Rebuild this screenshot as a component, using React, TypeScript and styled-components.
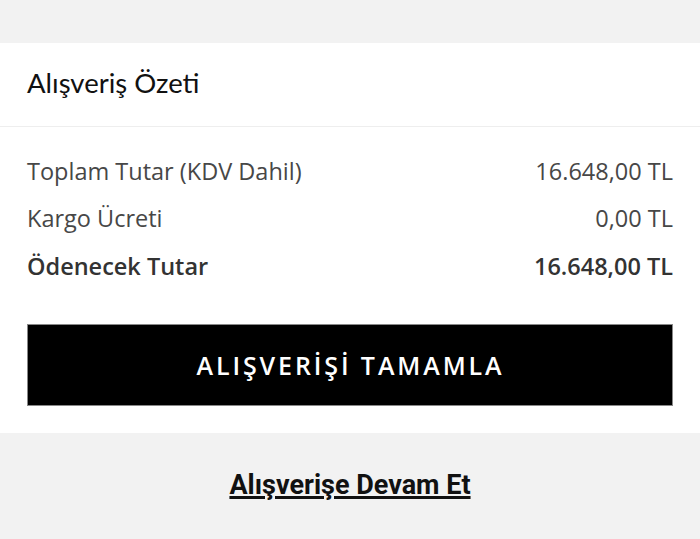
import React from "react";
import styled, { createGlobalStyle } from "styled-components";

const Global = createGlobalStyle`
  html, body { margin: 0; padding: 0; background: #f2f2f2; }
  body { font-family: "Open Sans", sans-serif; }
`;

const Page = styled.div`
  padding-top: 43px;
  width: 700px;
`;

const Card = styled.section`
  background: #ffffff;
`;

const Header = styled.div`
  height: 83px;
  display: flex;
  align-items: center;
  padding: 0 27px;
  border-bottom: 1px solid #eeeeee;
`;

const Title = styled.h2`
  margin: 0;
  font-family: Lato, sans-serif;
  font-weight: 400;
  font-size: 27.5px;
  color: #111;
  padding-bottom: 4px;
`;

const Body = styled.div`
  padding: 20px 27px 27px;
`;

const Row = styled.div<{ $bold?: boolean }>`
  display: flex;
  justify-content: space-between;
  align-items: center;
  height: 47.5px;
  font-size: 23.5px;
  font-weight: ${(p) => (p.$bold ? 600 : 400)};
  color: ${(p) => (p.$bold ? "#333" : "#474747")};
`;

const Rows = styled.div`
  margin-bottom: 34px;
`;

const Button = styled.button`
  display: flex;
  align-items: center;
  justify-content: center;
  width: 100%;
  height: 82px;
  background: #000;
  border: 1px solid #888;
  color: #fff;
  font-family: "Open Sans", sans-serif;
  font-weight: 600;
  font-size: 25px;
  letter-spacing: 2.9px;
  padding: 0 0 0 1px;
  cursor: pointer;
`;

const Footer = styled.div`
  display: flex;
  justify-content: center;
  padding-top: 36px;
`;

const Link = styled.a`
  font-family: Roboto, sans-serif;
  font-weight: 700;
  font-size: 27px;
  color: #111;
  text-decoration: underline;
  text-decoration-thickness: 3px;
  text-underline-offset: 2px;
`;

export default function App() {
  return (
    <>
      <Global />
      <Page>
        <Card>
          <Header>
            <Title>Alışveriş Özeti</Title>
          </Header>
          <Body>
            <Rows>
              <Row>
                <span>Toplam Tutar (KDV Dahil)</span>
                <span>16.648,00 TL</span>
              </Row>
              <Row>
                <span>Kargo Ücreti</span>
                <span>0,00 TL</span>
              </Row>
              <Row $bold>
                <span>Ödenecek Tutar</span>
                <span>16.648,00 TL</span>
              </Row>
            </Rows>
            <Button>ALIŞVERİŞİ TAMAMLA</Button>
          </Body>
        </Card>
        <Footer>
          <Link href="#">Alışverişe Devam Et</Link>
        </Footer>
      </Page>
    </>
  );
}
